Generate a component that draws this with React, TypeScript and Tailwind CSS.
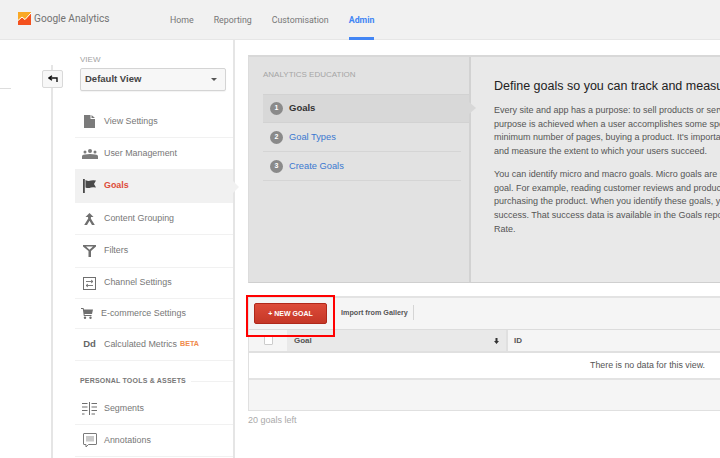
import React from 'react';

const base = "[font-family:'Liberation_Sans',Arial,sans-serif]";

const FileIcon = () => (
  <svg width="11" height="13" viewBox="0 0 11 13"><path d="M0 0h6.500v4H11v9H0z M7.500 0L11 3H7.500z" fill="#7b7b7b" /></svg>
);
const UsersIcon = () => (
  <svg width="16" height="10" viewBox="0 0 16 10" fill="#7b7b7b">
    <circle cx="3" cy="3" r="1.500" /><circle cx="8" cy="2" r="2" /><circle cx="13" cy="3" r="1.500" />
    <path d="M0 10V7.500Q0 5.500 3 5.500Q8 4.500 13 5.500Q16 5.500 16 7.500V10z" />
  </svg>
);
const FlagIcon = () => (
  <svg width="13" height="14" viewBox="0 0 13 14" fill="#4a4a4a">
    <rect x="0" y="0" width="1.800" height="14" />
    <path d="M2.500 1Q5 2.500 8 1.500Q10 1 13 1.500L11 5L13 8.500Q10 8 8 8.500Q5 9.500 2.500 8.500z" />
  </svg>
);
const MergeIcon = () => (
  <svg width="11" height="12" viewBox="0 0 11 12" fill="#6f6f6f">
    <path d="M5.500 0L9.500 4H7L6.800 5.500L10.800 12H8L5.500 7.800L3 12H.2L4.200 5.500L4 4H1.500z" />
  </svg>
);
const FilterIcon = () => (
  <svg width="13" height="12" viewBox="0 0 13 12" fill="#6f6f6f">
    <path d="M0 0h13v1.500L8 6v6H5.500V6L0 1.500zM3 1.500L6.500 4.800L10 1.500z" fillRule="evenodd" />
  </svg>
);
const ChannelIcon = () => (
  <svg width="13" height="13" viewBox="0 0 13 13" fill="none" stroke="#6f6f6f">
    <rect x=".5" y=".5" width="12" height="12" />
    <path d="M3 4.500h7M8 3l2 1.500L8 6M10 8.500H3M5 7L3 8.500L5 10" strokeWidth=".9" />
  </svg>
);
const CartIcon = () => (
  <svg width="12" height="11" viewBox="0 0 12 11" fill="#6f6f6f">
    <path d="M0 0h2.500L3 1.500h9L11 6H3.500L3.700 7H10.500V8H2.800L1.800 1H0z" />
    <circle cx="4" cy="9.700" r="1.200" /><circle cx="9.500" cy="9.700" r="1.200" />
  </svg>
);
const SegmentsIcon = () => (
  <svg width="15" height="13" viewBox="0 0 15 13" fill="#6f6f6f">
    <rect x="7" y="0" width="1" height="13" />
    <path d="M0 1h5.500v1H0zM0 4.500h5.500v1H0zM0 8h5.500v1H0zM0 11.500h2.500v1H0zM9.500 1H15v1H9.500zM9.500 4.500H15v1H9.500zM9.500 8H15v1H9.500zM9.500 11.500H13v1H9.500z" />
  </svg>
);
const NoteIcon = () => (
  <svg width="14" height="15" viewBox="0 0 14 15">
    <path d="M1 .5h12a.5.5 0 0 1 .5.5v10a.500.500 0 0 1-.5.500H5.500L3 14v-2.500H1a.500.500 0 0 1-.500-.500V1A.500.500 0 0 1 1 .5z" fill="#fff" stroke="#7b7b7b" />
    <rect x="3" y="3" width="8" height="5.500" fill="#c9c9c9" />
  </svg>
);

const menuTop = [
  { label: 'View Settings', icon: <FileIcon />, h: 'h-[32px]' },
  { label: 'User Management', icon: <UsersIcon />, h: 'h-[32px]' },
  { label: 'Goals', icon: <FlagIcon />, h: 'h-[33px]', active: true },
  { label: 'Content Grouping', icon: <MergeIcon />, h: 'h-[32px]' },
  { label: 'Filters', icon: <FilterIcon />, h: 'h-[33px]' },
  { label: 'Channel Settings', icon: <ChannelIcon />, h: 'h-[31px]' },
];

function MenuRow({ label, icon, h, active, iconBox = 'w-[24px] pr-[5px]', children }: { label: string; icon: React.ReactNode; h: string; active?: boolean; iconBox?: string; children?: React.ReactNode }) {
  return (
    <div className={`${h} flex items-center border-b border-[#f1f1f1] pl-[5px] relative ${active ? 'bg-[#f1f1f1]' : ''}`}>
      <span className={`${iconBox} flex justify-center shrink-0`}>{icon}</span>
      <span className={`text-[8.9px] whitespace-nowrap ${active ? 'font-bold text-[#dd4b39]' : 'text-[#777]'}`}>{label}</span>
      {children}
      {active && (
        <span className="absolute left-[158px] top-[11px] w-0 h-0 border-y-[6px] border-y-transparent border-l-[6px] border-l-[#f1f1f1]" />
      )}
    </div>
  );
}

const steps = [
  { n: 1, label: 'Goals', active: true },
  { n: 2, label: 'Goal Types' },
  { n: 3, label: 'Create Goals' },
];

export default function App() {
  return (
    <div className={`${base} w-[720px] h-[458px] overflow-hidden bg-white flex flex-col relative`}>
      <header className="h-[40px] shrink-0 bg-[#f1f1f1] border-b border-[#e6e6e6] flex items-start">
        <div className="flex items-center pl-[18px] pt-[11px] w-[170px] shrink-0">
          <svg width="13" height="13" viewBox="0 0 13 13" className="shrink-0">
            <rect width="13" height="13" fill="#f9a825" />
            <path d="M0 13V9l4-3.500 3 2.500 6-6.500V13z" fill="#f4511e" />
            <path d="M0 8.500l4-3.500 3 2.500L13 1" fill="none" stroke="#fff" strokeWidth="1" />
          </svg>
          <span className="ml-[3px] text-[10.1px] text-[#737373] [font-family:Roboto,sans-serif] whitespace-nowrap">Google Analytics</span>
        </div>
        <nav className="flex h-full text-[8.8px] text-[#777] gap-[20px] [font-family:Roboto,sans-serif]">
          <span className="pt-[14px]">Home</span>
          <span className="pt-[14px]">Reporting</span>
          <span className="pt-[14px]">Customisation</span>
          <span className="pt-[14px] font-bold text-[#4285f4] border-b-[3px] border-[#4285f4] h-[40px]">Admin</span>
        </nav>
      </header>

      <div className="flex flex-1 min-h-0">
        <div className="w-[75px] shrink-0 flex">
          <div className="w-[51px] shrink-0 pt-[48px]">
            <div className="w-[11px] h-px bg-[#ddd]" />
          </div>
          <div className="mt-[25px] border-l-2 border-[#e5e5e5] h-full">
            <button className="-ml-[11px] mt-[5px] w-[21px] h-[18px] bg-[#f7f7f7] border border-[#d9d9d9] rounded-[2px] flex items-center justify-center">
              <svg width="10" height="8" viewBox="0 0 10 8" fill="none" stroke="#111" strokeWidth="1.400">
                <path d="M4 .8L1 3l3 2.200M1 3h8v4" />
              </svg>
            </button>
          </div>
        </div>

        <aside className="w-[160px] shrink-0 border-r-2 border-[#e5e5e5]">
          <div className="pl-[5px] pr-[7px] pt-[15px]">
            <div className="text-[8px] text-[#a3a3a3] leading-[9px] h-[13px]">VIEW</div>
            <div className="h-[23px] bg-[#f7f7f7] border border-[#d4d4d4] rounded-[2px] flex items-center justify-between pl-[4px] pr-[5px] shadow-[0_1px_1px_rgba(0,0,0,0.05)]">
              <span className="text-[9.5px] font-bold text-[#444]">Default View</span>
              <span className="mr-[3px] w-0 h-0 border-x-[3px] border-x-transparent border-t-[3px] border-t-[#555]" />
            </div>
          </div>
          <div className="mt-[15px]">
            {menuTop.map((m) => (
              <MenuRow key={m.label} {...m} />
            ))}
            <MenuRow label="E-commerce Settings" icon={<CartIcon />} h="h-[30px]" iconBox="w-[21px] pr-[7px]" />
            <MenuRow label="Calculated Metrics" icon={<span className="text-[9.5px] font-bold text-[#666]">Dd</span>} h="h-[32px]">
              <span className="ml-[3px] text-[7.2px] font-bold text-[#f08a4b]">BETA</span>
            </MenuRow>
            <div className="h-[32px] pl-[5px] flex items-end">
              <span className="text-[7px] font-bold text-[#777] tracking-[0.2px] whitespace-nowrap pb-[7px]">PERSONAL TOOLS &amp; ASSETS</span>
              <span className="flex-1 h-px bg-[#f1f1f1] ml-[5px] mb-[11px]" />
            </div>
            <MenuRow label="Segments" icon={<SegmentsIcon />} h="h-[32px]" />
            <MenuRow label="Annotations" icon={<NoteIcon />} h="h-[32px]" />
          </div>
        </aside>

        <main className="flex-1 min-w-0 pl-[13px] pt-[15px]">
          <section className="w-[560px] h-[228px] flex bg-[#e2e2e2] border-t-2 border-[#d8d8d8] border-b border-b-[#cfcfcf] border-l border-l-[#dcdcdc]">
            <div className="w-[222px] shrink-0 border-r-2 border-[#d2d2d2] pl-[14px] pt-[13px]">
              <div className="text-[8px] text-[#a5a5a5] leading-[10px] whitespace-nowrap">ANALYTICS EDUCATION</div>
              <ul className="mt-[14px]">
                {steps.map((s) => (
                  <li
                    key={s.n}
                    className={
                      s.active
                        ? 'h-[29px] flex items-center bg-[#d8d8d8] border-y border-[#d2d2d2] relative'
                        : 'h-[29px] flex items-center border-b border-[#d5d5d5] mr-[8px] pt-[1px]'
                    }
                  >
                    <span className="ml-[7px] w-[13px] h-[13px] rounded-full bg-[#8a8a8a] text-white text-[7px] font-bold flex items-center justify-center">{s.n}</span>
                    <span className={s.active ? 'ml-[6px] text-[9.5px] font-bold text-[#333]' : 'ml-[6px] text-[9.3px] text-[#3a78d0]'}>{s.label}</span>
                    {s.active && (
                      <span className="absolute left-[206px] top-[7px] w-0 h-0 border-y-[6px] border-y-transparent border-l-[7px] border-l-[#d8d8d8]" />
                    )}
                  </li>
                ))}
              </ul>
            </div>
            <div className="flex-1 bg-[#e9e9e9] pl-[23px] pt-[21px] whitespace-nowrap">
              <h2 className="text-[12.5px] leading-[16px] text-[#222]">Define goals so you can track and measure success</h2>
              <div className="mt-[10px] text-[9px] leading-[13.7px] text-[#555]">
                <p>Every site and app has a purpose: to sell products or services,</p>
                <p>purpose is achieved when a user accomplishes some specific</p>
                <p>minimum number of pages, buying a product. It's important to</p>
                <p>and measure the extent to which your users succeed.</p>
              </div>
              <div className="mt-[9px] text-[9px] leading-[13.7px] text-[#555]">
                <p>You can identify micro and macro goals. Micro goals are small</p>
                <p>goal. For example, reading customer reviews and product</p>
                <p>purchasing the product. When you identify these goals, you</p>
                <p>success. That success data is available in the Goals reports</p>
                <p>Rate.</p>
              </div>
            </div>
          </section>

          <section className="mt-[13px] w-[560px] border border-[#e0e0e0] border-t-2 border-t-[#e3e3e3]">
            <div className="h-[32px] bg-[#f5f5f5] flex items-start pl-[5px] pt-[5px] border-b border-[#dcdcdc]">
              <button className="w-[73px] h-[21px] pt-[1px] rounded-[2px] bg-gradient-to-b from-[#dd4b39] to-[#c53727] border border-[#b0281a] text-white text-[7px] font-bold">
                + NEW GOAL
              </button>
              <span className="ml-[14px] mt-[5px] text-[7.2px] font-bold text-[#555] whitespace-nowrap">Import from Gallery</span>
              <span className="ml-[5px] mt-[2px] w-px h-[15px] bg-[#d5d5d5]" />
            </div>
            <div className="h-[23px] flex border-b-2 border-[#e0e0e0] bg-[#f5f5f5]">
              <div className="w-[38px] flex items-center justify-center">
                <span className="w-[9px] h-[9px] bg-white border border-[#ccc] rounded-[1px]" />
              </div>
              <div className="w-[221px] bg-[#e9e9e9] border-r-2 border-[#e0e0e0] flex items-center justify-between pl-[7px] pr-[7px]">
                <span className="text-[8px] font-bold text-[#555]">Goal</span>
                <svg width="5" height="6" viewBox="0 0 5 6" fill="#333"><path d="M1.500 0h2v3H5L2.500 6 0 3h1.500z" /></svg>
              </div>
              <div className="flex-1 pl-[6px] flex items-center text-[8px] font-bold text-[#555]">ID</div>
            </div>
            <div className="h-[27px] flex items-center pl-[341px] pt-[1px] text-[8.85px] text-[#555] whitespace-nowrap border-b-2 border-[#e3e3e3]">
              There is no data for this view.
            </div>
            <div className="h-[30px] bg-[#f5f5f5]" />
          </section>
          <div className="mt-[3px] text-[9px] leading-[12px] text-[#aaa]">20 goals left</div>
        </main>
      </div>

      <div className="absolute left-[246px] top-[295px] w-[89px] h-[42px] border-2 border-[#f00]" />
    </div>
  );
}
